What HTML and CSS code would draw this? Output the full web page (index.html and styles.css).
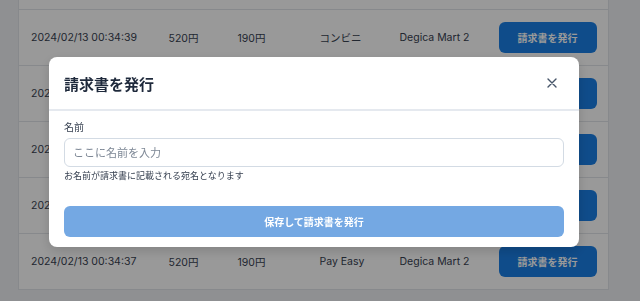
FILE: index.html
```html
<!DOCTYPE html>
<html lang="ja">

<head>
    <meta charset="UTF-8">
    <meta name="viewport" content="width=device-width, initial-scale=1.0">
    <title>請求書を発行</title>
    <link rel="stylesheet" href="styles.css">
</head>

<body>
    <div class="page">
        <table class="orders">
            <colgroup>
                <col class="col-date">
                <col class="col-amount">
                <col class="col-fee">
                <col class="col-method">
                <col class="col-store">
                <col class="col-action">
            </colgroup>
            <tbody>
                <!-- tail of the previous row, scrolled out of view -->
                <tr class="row-clipped">
                    <td></td>
                    <td></td>
                    <td></td>
                    <td></td>
                    <td></td>
                    <td></td>
                </tr>
                <tr>
                    <td>2024/02/13 00:34:39</td>
                    <td>520円</td>
                    <td>190円</td>
                    <td>コンビニ</td>
                    <td>Degica Mart 2</td>
                    <td><button class="button">請求書を発行</button></td>
                </tr>
                <tr>
                    <td>2024/02/13 00:34:39</td>
                    <td>520円</td>
                    <td>190円</td>
                    <td>コンビニ</td>
                    <td>Degica Mart 2</td>
                    <td><button class="button">請求書を発行</button></td>
                </tr>
                <tr>
                    <td>2024/02/13 00:34:38</td>
                    <td>520円</td>
                    <td>190円</td>
                    <td>Pay Easy</td>
                    <td>Degica Mart 2</td>
                    <td><button class="button">請求書を発行</button></td>
                </tr>
                <tr>
                    <td>2024/02/13 00:34:38</td>
                    <td>520円</td>
                    <td>190円</td>
                    <td>コンビニ</td>
                    <td>Degica Mart 2</td>
                    <td><button class="button">請求書を発行</button></td>
                </tr>
                <tr>
                    <td>2024/02/13 00:34:37</td>
                    <td>520円</td>
                    <td>190円</td>
                    <td>Pay Easy</td>
                    <td>Degica Mart 2</td>
                    <td><button class="button">請求書を発行</button></td>
                </tr>
            </tbody>
        </table>
    </div>

    <div class="overlay">
        <div class="modal">
            <div class="modal-header">
                <h2>請求書を発行</h2>
                <button class="close" aria-label="閉じる">
                    <svg width="10" height="10" viewBox="0 0 10 10">
                        <path d="M1 1L9 9M9 1L1 9" stroke="#475569" stroke-width="1.4" stroke-linecap="round" />
                    </svg>
                </button>
            </div>
            <form class="modal-body">
                <label for="recipientName">名前</label>
                <input type="text" id="recipientName" placeholder="ここに名前を入力">
                <p class="hint">お名前が請求書に記載される宛名となります</p>
                <button type="submit" class="submit" disabled>保存して請求書を発行</button>
            </form>
        </div>
    </div>
</body>

</html>
```

FILE: styles.css
```css
body {
    margin: 0;
    background-color: #eff1f3;
    font-family: Inter, "Noto Sans CJK JP", sans-serif;
    color: #374151;
    overflow: hidden;
}

.page {
    padding: 0 31px 0 18px;
}

.orders {
    width: 591px;
    border-collapse: collapse;
    table-layout: fixed;
    background-color: #ffffff;
    border-left: 1px solid #e2e5e9;
    border-right: 1px solid #e2e5e9;
}

.col-date { width: 138px; }
.col-amount { width: 69px; }
.col-fee { width: 82px; }
.col-method { width: 80px; }
.col-store { width: 99px; }
.col-action { width: 122px; }

.orders td {
    height: 55px;
    padding: 0 12px;
    border-bottom: 1px solid #e2e5e9;
    font-size: 10.5px;
    white-space: nowrap;
}

.orders .row-clipped td {
    height: 9px;
}

.button {
    width: 98px;
    height: 31px;
    border: none;
    border-radius: 6px;
    background-color: #1a7fe6;
    color: #ffffff;
    font-family: inherit;
    font-size: 10px;
    font-weight: bold;
}

.overlay {
    position: fixed;
    inset: 0;
    background-color: rgba(0, 0, 0, 0.4);
    display: flex;
    align-items: flex-start;
    justify-content: center;
    padding: 57px 31px 0 19px;
}

.modal {
    width: 530px;
    background-color: #ffffff;
    border-radius: 8px;
    box-shadow: 0 4px 12px rgba(0, 0, 0, 0.15);
}

.modal-header {
    display: flex;
    align-items: center;
    justify-content: space-between;
    padding: 0 22px 0 15px;
    height: 52px;
    border-bottom: 2px solid #e5e9ef;
}

.modal-header h2 {
    margin: 0;
    font-size: 15px;
    font-weight: bold;
    color: #1e293b;
}

.close {
    display: flex;
    padding: 0;
    border: none;
    background: none;
}

.modal-body {
    display: flex;
    flex-direction: column;
    padding: 8px 15px 10px;
}

label {
    font-size: 10px;
    line-height: 16px;
    color: #374151;
}

input[type="text"] {
    margin-top: 3px;
    height: 29px;
    box-sizing: border-box;
    padding: 0 8px;
    border: 1px solid #d3dbe4;
    border-radius: 6px;
    font-family: inherit;
    font-size: 11px;
    color: #374151;
}

input::placeholder {
    color: #7d8795;
}

.hint {
    margin: 2px 0 0;
    font-size: 9px;
    line-height: 14px;
    color: #374151;
}

.submit {
    margin-top: 23px;
    height: 31px;
    border: none;
    border-radius: 6px;
    background-color: #74a8e3;
    color: #ffffff;
    font-family: inherit;
    font-size: 10px;
    font-weight: bold;
}
```
